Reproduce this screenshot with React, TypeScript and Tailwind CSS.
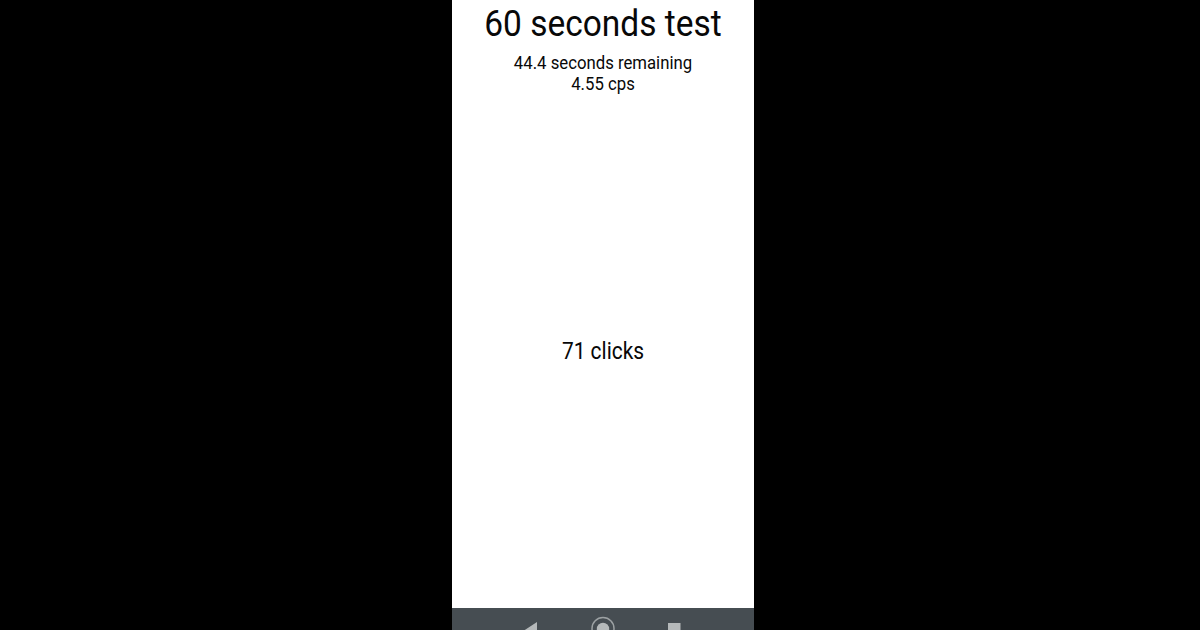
import React from "react";

interface TestState {
  duration: number;
  remaining: string;
  cps: string;
  clicks: number;
}

const test: TestState = {
  duration: 60,
  remaining: "44.4",
  cps: "4.55",
  clicks: 71,
};

const NavBar = () => {
  return (
    <div className="flex h-[22px] shrink-0 overflow-hidden bg-[#464d52]">
      <svg className="h-[22px] w-[302px]" viewBox="0 0 302 22" fill="none">
        <path d="M72 22.5L85 14V23Z" fill="#b5b9ba" />
        <circle cx="151" cy="20.5" r="11" stroke="#9ca1a3" strokeWidth="1.5" />
        <circle cx="151" cy="21" r="6.2" fill="#b5b9ba" />
        <rect x="216" y="15" width="12.5" height="13" fill="#b5b9ba" />
      </svg>
    </div>
  );
};

export default function App() {
  return (
    <div className="flex h-[630px] w-[1200px] overflow-hidden bg-black pl-[452px] font-[Roboto,sans-serif] text-[#080808]">
      <div className="flex w-[302px] flex-col bg-white">
        {/* the type is slightly condensed */}
        <div className="flex scale-x-[0.93] flex-col items-center">
          <h1 className="h-[52px] text-[36px] leading-[48px] whitespace-nowrap">{test.duration} seconds test</h1>
          <p className="h-[21px] text-[18px] leading-[22px] whitespace-nowrap">{test.remaining} seconds remaining</p>
          <p className="text-[18px] leading-[22px]">{test.cps} cps</p>
        </div>
        <div className="flex flex-1 scale-x-[0.91] justify-center pt-[242px]">
          <p className="text-[23px] leading-[30px]">{test.clicks} clicks</p>
        </div>
        <NavBar />
      </div>
    </div>
  );
}
